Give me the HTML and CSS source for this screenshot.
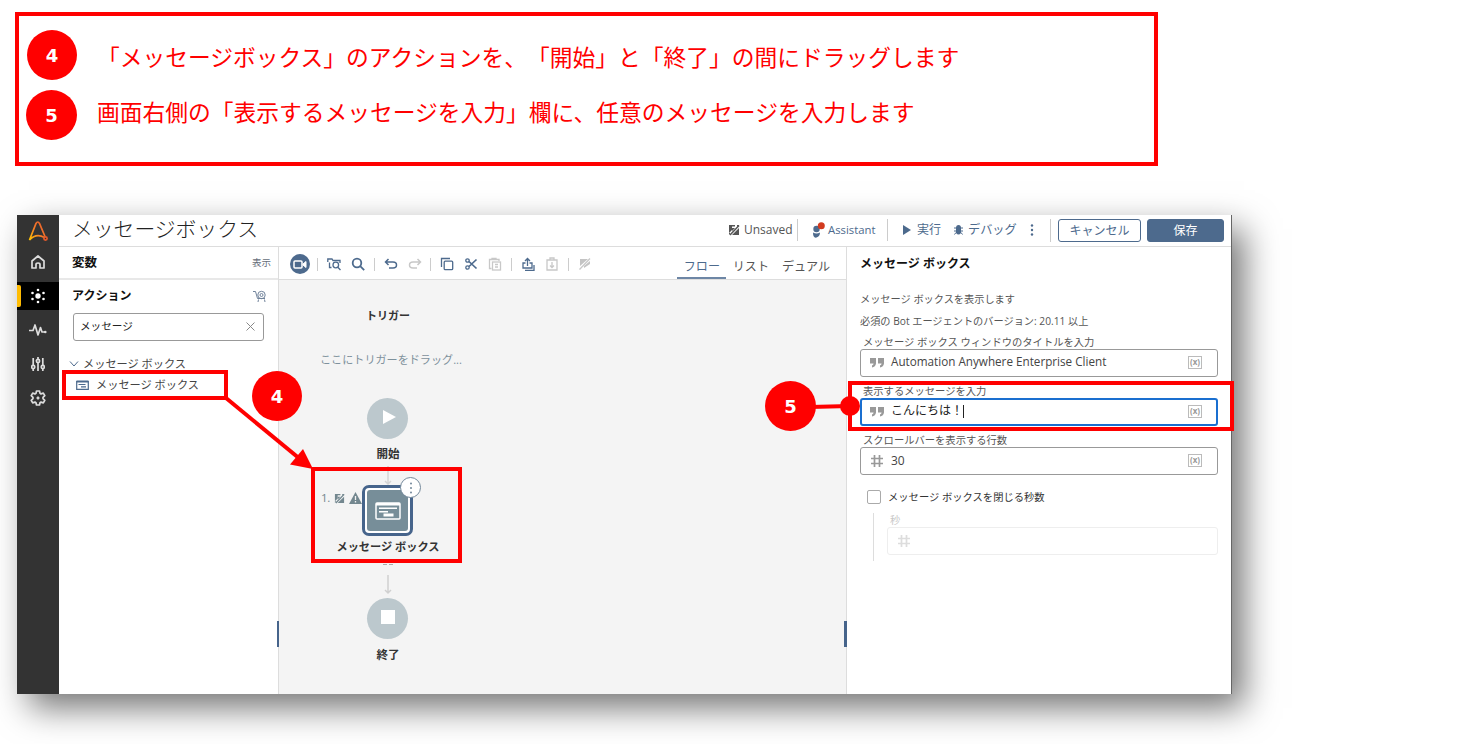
FILE: index.html
```
<!DOCTYPE html>
<html lang="ja">
<head>
    <meta charset="UTF-8">
    <title>メッセージボックス</title>
    <link rel="stylesheet" href="styles.css">
</head>
<body>
    <!-- Shared icons -->
    <svg class="sprite">
        <symbol id="quote" viewBox="0 0 14 10"><path d="M0 0h6v5.5Q5.500 9 2 9.500V7.500Q3.500 7 3.600 5.500H0zM8 0h6v5.500Q13.500 9 10 9.500V7.500Q11.500 7 11.600 5.500H8z"/></symbol>
        <symbol id="hash" viewBox="0 0 14 14"><path d="M4.500 1v12M9.500 1v12M1 4.500h12M1 9.500h12" fill="none" stroke="currentColor" stroke-width="1.700"/></symbol>
        <symbol id="unsaved" viewBox="0 0 12 12"><path d="M1 1h6v1.500H4V6L1 9zM11 4v7H4zM1 9h1.500L1 11z"/><path d="M2 11 11 1.500" fill="none" stroke="currentColor" stroke-width="1.500"/><path d="M4 4h3L4 7zM9 1h2v1L9 3z"/></symbol>
        <symbol id="box" viewBox="0 0 26 18"><rect x="1" y="1" width="24" height="16" rx="1" fill="none" stroke="currentColor" stroke-width="1.500"/><path d="M1 1h24v2.500H1zM4 5.500h18v1.500H4zM4 9h9v1.500H4zM8.500 11.500h10v3h-10z"/></symbol>
        <symbol id="box-small" viewBox="0 0 13 10"><path d="M.700 1.500h11.600v7.800H.700z" fill="none" stroke="currentColor" stroke-width="1.200"/><path d="M.500.500h12V2.500H.500zM2.500 4h7v1h-7zM5 6.200h5v1.300H5z"/></symbol>
    </svg>

    <div class="page">
        <section class="guide">
            <div class="step"><span class="num">4</span><p>「メッセージボックス」のアクションを、「開始」と「終了」の間にドラッグします</p></div>
            <div class="step step-5"><span class="num">5</span><p>画面右側の「表示するメッセージを入力」欄に、任意のメッセージを入力します</p></div>
        </section>

        <div class="app">
            <nav class="sidebar">
                <div class="logo">
                    <svg width="22" height="22" viewBox="0 0 22 22" fill="none" stroke-width="1.700">
                        <defs><linearGradient id="lg" x1="0" y1="1" x2="1" y2="0"><stop offset="0" stop-color="#ffc400"/><stop offset=".5" stop-color="#f5792a"/><stop offset="1" stop-color="#e55a2b"/></linearGradient></defs>
                        <path d="M17.500 17.500Q9 13 2.500 20L9 3.500Q10.800.500 12.500 3.500L18 16.500" stroke="url(#lg)"/>
                        <circle cx="18.500" cy="18.500" r="1.600" stroke="#e55a2b"/>
                    </svg>
                </div>
                <a><svg width="14" height="14" viewBox="0 0 14 14" fill="none" stroke="currentColor" stroke-width="1.700"><path d="M1 6 7 1l6 5v7H9V9.500Q9 8 7 8T5 9.500V13H1z" stroke-linejoin="round"/></svg></a>
                <a class="active"><svg width="16" height="16" viewBox="0 0 16 16" fill="currentColor"><circle cx="8" cy="8" r="2.700"/><circle cx="8" cy="2" r="1.300"/><circle cx="8" cy="14" r="1.300"/><circle cx="2.500" cy="5" r="1.300"/><circle cx="13.500" cy="5" r="1.300"/><circle cx="2.500" cy="11" r="1.300"/><circle cx="13.500" cy="11" r="1.300"/></svg></a>
                <a><svg width="18" height="14" viewBox="0 0 18 14" fill="none" stroke="currentColor" stroke-width="1.700"><path d="M0 7.500h4L6 2l3 10 2.500-7.500L13 9h3" stroke-linejoin="round"/><circle cx="16.300" cy="9" r="1.300" fill="currentColor" stroke="none"/></svg></a>
                <a><svg width="14" height="14" viewBox="0 0 14 14" fill="none" stroke="currentColor" stroke-width="1.700"><path d="M2.200 1v7M2.200 12v2M7 0v2M7 6v8M11.800 1v7M11.800 12v2"/><circle cx="2.200" cy="10" r="1.600"/><circle cx="7" cy="4" r="1.600"/><circle cx="11.800" cy="10" r="1.600"/></svg></a>
                <a><svg width="16" height="16" viewBox="0 0 16 16" fill="none" stroke="currentColor" stroke-width="1.700"><path d="M6.500 1h3l.500 2.300 1 .600 2.300-.800 1.500 2.600L13 7.400v1.200l1.800 1.700-1.500 2.600-2.300-.800-1 .600L9.500 15h-3L6 12.700l-1-.600-2.300.800-1.500-2.600L3 8.600V7.400L1.200 5.700l1.500-2.600 2.300.800 1-.600z" stroke-linejoin="round"/><path d="M8 6.500v3M6.500 8h3"/></svg></a>
            </nav>

            <div class="main">
                <header class="topbar">
                    <h1>メッセージボックス</h1>
                    <span class="unsaved"><svg width="12" height="12" fill="currentColor"><use href="#unsaved"/></svg>Unsaved</span>
                    <span class="assistant">
                        <svg width="14" height="18" viewBox="0 0 14 18"><g fill="#4d6a8d"><circle cx="4.500" cy="8" r="3.200"/><path d="M1 11.500q3.500 2 7 0 0 4-3.500 5t-3.500-5"/></g><circle cx="9.300" cy="4.700" r="3.500" fill="#d23b1f"/></svg>Assistant
                    </span>
                    <span class="run"><svg width="8" height="10" fill="currentColor"><path d="M0 0 8 5 0 10z"/></svg>実行</span>
                    <span class="debug"><svg width="11" height="10" viewBox="0 0 11 10"><path d="M3 3q0-3 2.500-3T8 3v5q-2.500 3-5 0z" fill="currentColor"/><path d="M1 3h9M1 6h9M1.500 9.500 3 7.500M9.500 9.500 8 7.500" stroke="currentColor"/></svg>デバッグ</span>
                    <svg class="more" width="4" height="12" fill="#4d6a8d"><circle cx="2" cy="1.500" r="1.200"/><circle cx="2" cy="6" r="1.200"/><circle cx="2" cy="10.500" r="1.200"/></svg>
                    <span class="actions">
                        <button class="btn">キャンセル</button>
                        <button class="btn primary">保存</button>
                    </span>
                </header>

                <div class="columns">
                    <aside class="palette">
                        <div class="vars"><b>変数</b><span>表示</span></div>
                        <div class="acts">
                            <b>アクション</b>
                            <svg width="14" height="13" viewBox="0 0 14 13" fill="none" stroke="#71839b"><path d="M0 1.500h2.500l2 7h7.500"/><circle cx="8.500" cy="5" r="3.700"/><circle cx="8.500" cy="5" r="1.500"/><path d="M5.500 9.500 5 12M11.500 9.500l.500 2.500"/></svg>
                        </div>
                        <div class="search"><span>メッセージ</span><svg width="9" height="9" stroke="#888"><path d="M.500.500l8 8M8.500.500l-8 8"/></svg></div>
                        <div class="group"><svg width="10" height="6" fill="none" stroke="#4d6a8d"><path d="M1 .500l4 4.500 4-4.500"/></svg>メッセージ ボックス</div>
                        <div class="item"><svg width="13" height="10" color="#4d6a8d" fill="currentColor"><use href="#box-small"/></svg>メッセージ ボックス</div>
                    </aside>

                    <section class="flow">
                        <div class="toolbar">
                            <i class="cam"><svg width="14" height="9" viewBox="0 0 14 9" fill="none" stroke="#fff" stroke-width="1.500"><rect x="1" y="1" width="8" height="7" rx="1"/><path d="M10 4 13 1.500v6L10 5z" fill="#fff" stroke-width="1"/></svg></i>
                            <hr>
                            <i><svg width="14" height="14" viewBox="0 0 14 14"><path d="M4.500 10.500H2.500V5.500M.800 5V2H5l1 1.500h7V6"/><circle cx="8.800" cy="8" r="2.800"/><path d="M10.800 10.200 13.500 13"/></svg></i>
                            <i><svg width="14" height="14" viewBox="0 0 14 14" stroke-width="1.800"><circle cx="6" cy="6" r="4.300"/><path d="m9.200 9.200 4 4"/></svg></i>
                            <hr>
                            <i><svg width="14" height="12" viewBox="0 0 14 12" stroke-width="1.500"><path d="M4.500 1 1.500 4l3 3M1.500 4H9q3.500 0 3.500 3T9 10H5"/></svg></i>
                            <i class="off redo"><svg width="14" height="12" viewBox="0 0 14 12" stroke-width="1.500"><path d="m9.500 1 3 3-3 3M12.500 4H5Q1.500 4 1.500 7T5 10h4"/></svg></i>
                            <hr>
                            <i><svg width="14" height="14" viewBox="0 0 14 14"><path d="M1.500 10V1.500H10"/><rect x="4.200" y="4.200" width="8.500" height="8.500" rx="1"/></svg></i>
                            <i><svg width="14" height="14" viewBox="0 0 14 14"><circle cx="3.500" cy="3.500" r="1.700"/><circle cx="3.500" cy="10.500" r="1.700"/><path d="M5 4.500 12.500 11.500M5 9.500 12.500 2.500" stroke-width="1.700"/></svg></i>
                            <i class="off"><svg width="14" height="14" viewBox="0 0 14 14"><path d="M3.500 11.500h-2v-9H11V4M4 2.500v-1h4v1"/><rect x="4.500" y="5" width="8" height="8"/><path d="M7 7.500h3M7 10h3"/></svg></i>
                            <hr>
                            <i><svg width="14" height="14" viewBox="0 0 14 14"><path d="M6.500 9V1.500M4 4l2.500-2.500L9 4M4.500 6H2v5h9V6H8.500M4 13.300h9V8"/></svg></i>
                            <i class="off"><svg width="14" height="14" viewBox="0 0 14 14"><path d="M2 3h10v10H2zM5 3V1h4v2M7 5v5M5 8.500l2 2 2-2"/></svg></i>
                            <hr>
                            <i class="off"><svg width="14" height="14" viewBox="0 0 14 14"><path d="M2 2h8L2 9zM12 4v3L6 11V9z" fill="#c4c4c4" stroke="none"/><path d="M1.500 12.500 12 1.500"/></svg></i>
                            <div class="tabs"><span class="on">フロー</span><span>リスト</span><span>デュアル</span></div>
                        </div>

                        <!-- Flow nodes -->
                        <div class="canvas">
                            <b class="node t-trigger">トリガー</b>
                            <span class="node t-drop">ここにトリガーをドラッグ...</span>
                            <div class="node circle n-start"><svg width="13" height="14" fill="#fff"><path d="M0 0 13 7 0 14z"/></svg></div>
                            <b class="node t-start">開始</b>
                            <svg class="node link-1" width="8" height="19" fill="none" stroke="#d5d5d5"><path d="M4 0v18M1 15l3 3 3-3" stroke-width="1.500"/></svg>
                            <div class="node t-index">1.
                                <svg width="11" height="11" viewBox="0 0 12 12" fill="currentColor"><use href="#unsaved"/></svg>
                                <svg width="13" height="12" viewBox="0 0 13 12"><path d="M6.500 0 13 12H0z" fill="currentColor"/><path d="M6.500 4v4M6.500 9v1.500" stroke="#f4f4f4" stroke-width="1.300"/></svg>
                            </div>
                            <div class="node n-box"><div><svg width="26" height="18" color="#fff" fill="currentColor"><use href="#box"/></svg></div></div>
                            <div class="node n-more"><svg width="4" height="12" fill="#73889a"><circle cx="2" cy="1.500" r="1"/><circle cx="2" cy="6" r="1"/><circle cx="2" cy="10.500" r="1"/></svg></div>
                            <b class="node t-box">メッセージ ボックス</b>
                            <svg class="node link-2" width="10" height="32" fill="none" stroke="#d0d0d0" stroke-width="1.500"><path d="M0 1.500h4M6 1.500h4" stroke="#aaa" stroke-width="1"/><path d="M5 12v18M2 27l3 3 3-3"/></svg>
                            <div class="node circle n-end"><svg width="14" height="14" fill="#fff"><path d="M0 0h14v14H0z"/></svg></div>
                            <b class="node t-end">終了</b>
                            <div class="node grip g-left"></div>
                            <div class="node grip g-right"></div>
                        </div>
                    </section>

                    <aside class="props">
                        <h2>メッセージ ボックス</h2>
                        <p class="desc">メッセージ ボックスを表示します</p>
                        <p class="desc ver">必須の Bot エージェントのバージョン: 20.11 以上</p>
                        <label>メッセージ ボックス ウィンドウのタイトルを入力</label>
                        <div class="field"><svg width="14" height="10" fill="#999"><use href="#quote"/></svg><span class="latin">Automation Anywhere Enterprise Client</span><em>(x)</em></div>
                        <label>表示するメッセージを入力</label>
                        <div class="field focus"><svg width="14" height="10" fill="#999"><use href="#quote"/></svg><span class="typed">こんにちは！</span><em>(x)</em></div>
                        <label>スクロールバーを表示する行数</label>
                        <div class="field"><svg width="14" height="14" color="#999"><use href="#hash"/></svg><span>30</span><em>(x)</em></div>
                        <div class="check"><span></span>メッセージ ボックスを閉じる秒数</div>
                        <div class="nested">
                            <label>秒</label>
                            <div class="field"><svg width="14" height="14" color="#ddd"><use href="#hash"/></svg></div>
                        </div>
                    </aside>
                </div>
            </div>
        </div>

        <!-- Callouts over the app -->
        <div class="mark m-item"></div>
        <div class="mark m-node"></div>
        <div class="mark m-field"></div>
        <svg class="lines" width="1480" height="744">
            <path d="M226 398 300 459" stroke="#f00" stroke-width="4"/>
            <path d="M313 469 290 464.500 303 449z" fill="#f00"/>
            <path d="M810 407 850 406" stroke="#f00" stroke-width="4"/>
            <circle cx="850" cy="406" r="10" fill="#f00"/>
        </svg>
        <span class="num callout c-4">4</span>
        <span class="num callout c-5">5</span>
    </div>
</body>
</html>
```
FILE: styles.css
```
* {
    box-sizing: border-box;
}
body {
    margin: 0;
    background: #fff;
    font-family: "Open Sans", "Noto Sans CJK JP", sans-serif;
    font-size: 12px;
    line-height: 1;
    color: #444;
}
h1, h2, p, hr {
    margin: 0;
    font-weight: normal;
}
svg {
    flex: none;
}
.sprite {
    display: none;
}
.page {
    position: relative;
    width: 1480px;
    height: 744px;
    padding: 12px 0 0 15px;
    overflow: hidden;
}

/* Instructions */
.guide {
    width: 1143px;
    height: 154px;
    border: 4px solid #f00;
    padding: 14px 0 0 8px;
}
.step {
    display: flex;
    height: 50px;
    color: #f00;
    font-family: "Noto Sans CJK JP", sans-serif;
    font-size: 22.75px;
    font-weight: 300;
    text-spacing-trim: space-all;
    white-space: nowrap;
}
.step p {
    margin: 16px 0 0 20px;
}
.step-5 {
    margin: 10px 0 0 -1px;
}
.step-5 p {
    margin-top: 11px;
}
.num {
    display: flex;
    align-items: center;
    justify-content: center;
    width: 50px;
    height: 50px;
    border-radius: 50%;
    background: #f00;
    color: #fff;
    font: bold 18px "DejaVu Sans", sans-serif;
}
.step-5 .num {
    width: 51px;
}

/* App window */
.app {
    display: flex;
    width: 1215px;
    height: 479px;
    margin: 49px 0 0 2px;
    background: #fff;
    box-shadow: 12px 14px 32px rgba(0, 0, 0, .54);
    border-right: 1px solid #666;
    white-space: nowrap;
}
.sidebar {
    width: 42px;
    background: #333;
    display: flex;
    flex-direction: column;
    gap: 6px;
}
.logo {
    height: 27px;
    padding: 5px 0 0 10px;
}
.sidebar a {
    display: flex;
    align-items: center;
    justify-content: center;
    height: 28px;
    color: #ddd;
}
.sidebar .active {
    background: #000;
    color: #fff;
    position: relative;
}
.active::before {
    content: "";
    position: absolute;
    left: 0;
    top: 3px;
    width: 4px;
    height: 22px;
    border-radius: 0 2px 2px 0;
    background: #ffbc03;
}
.main {
    flex: 1;
    min-width: 0;
}
.topbar {
    display: flex;
    align-items: center;
    height: 32px;
    padding: 0 7px 1px 13px;
    border-bottom: 1px solid #ddd;
    color: #4d6a8d;
}
.topbar h1 {
    flex: 1;
    padding-bottom: 1px;
    font-size: 20.8px;
    font-weight: 300;
    color: #222;
}
.topbar > span {
    display: flex;
    align-items: center;
}
.unsaved {
    width: 70px;
    height: 22px;
    gap: 4px;
    border-right: 1px solid #ccc;
    color: #555;
}
.assistant {
    width: 90px;
    height: 22px;
    padding-left: 14px;
    gap: 2px;
    border-right: 1px solid #ccc;
    font-size: 11.3px;
}
.run {
    width: 65px;
    padding-left: 15px;
    gap: 6px;
}
.debug {
    gap: 4px;
    width: 77px;
    font-size: 12.2px;
}
.more {
    margin-right: 16px;
}
.topbar .actions {
    height: 23px;
    padding-left: 7px;
    gap: 6px;
    border-left: 1px solid #ccc;
}
.btn {
    width: 83px;
    height: 23px;
    padding: 0 0 1px;
    border: 1px solid #4d6a8d;
    border-radius: 3px;
    background: #fff;
    color: #4d6a8d;
    font: 12px "Noto Sans CJK JP", sans-serif;
}
.btn.primary {
    width: 77px;
    background: #4d6a8d;
    color: #fff;
}
.columns {
    display: flex;
    height: 447px;
}

/* Action palette */
.palette {
    width: 220px;
    border-right: 1px solid #ddd;
}
.palette b {
    color: #111;
    font-weight: 600;
}
.vars, .acts {
    display: flex;
    justify-content: space-between;
    align-items: center;
    height: 33px;
    padding: 1px 7px 0 13px;
    border-bottom: 2px solid #e8e8e8;
}
.vars {
    font-size: 12.5px;
}
.vars span {
    font-size: 9.5px;
    color: #666e7a;
}
.acts {
    border: 0;
    padding: 0 11px 1px 13px;
}
.search {
    display: flex;
    align-items: center;
    justify-content: space-between;
    width: 191px;
    height: 28px;
    margin-left: 14px;
    padding: 0 8px 1px 6px;
    border: 1px solid #999;
    border-radius: 3px;
    font-size: 10.6px;
    color: #222;
}
.group, .item {
    display: flex;
    align-items: center;
    gap: 4px;
    padding-left: 10px;
    height: 21px;
    font-size: 11.2px;
}
.group {
    margin-top: 12px;
}
.item {
    padding-left: 17px;
    gap: 7px;
}

/* Flow editor */
.flow {
    width: 567px;
    background: #f4f4f4;
}
.toolbar {
    display: flex;
    align-items: center;
    height: 33px;
    padding: 2px 0 0 9px;
    background: #fff;
    border-bottom: 1px solid #ddd;
}
.toolbar i {
    display: flex;
    justify-content: center;
    width: 24px;
    height: 14px;
    align-items: center;
    fill: none;
    stroke: #4d6a8d;
    stroke-width: 1.3;
}
.toolbar .cam {
    width: 20px;
    height: 20px;
    margin: 0 3px 0 2px;
    border-radius: 50%;
    background: #4d6a8d;
}
.toolbar .off {
    stroke: #c8c8c8;
}
.toolbar .redo {
    width: 23px;
}
.toolbar hr {
    width: 1px;
    height: 13px;
    margin: 0 4px;
    border: 0;
    background: #ccc;
}
.tabs {
    display: flex;
    align-self: stretch;
    margin-left: auto;
    padding-right: 16px;
    color: #555;
}
.tabs span {
    padding: 12px 0 0;
    margin-left: 13px;
    font-size: 12.1px;
}
.tabs .on {
    width: 49px;
    padding-left: 7px;
    margin-right: -6px;
    color: #4d6a8d;
    border-bottom: 2px solid #6d86a5;
}
.canvas {
    position: relative;
    height: 414px;
}
.canvas b {
    font-weight: 600;
    color: #333;
    transform: translateX(-50%);
}
.node {
    position: absolute;
}
.t-trigger { left: 109px; top: 30px; font-size: 11px; }
.t-drop { left: 41px; top: 74px; font-size: 11.1px; color: #7e919c; }
.circle {
    left: 88px;
    display: flex;
    align-items: center;
    justify-content: center;
    width: 41px;
    height: 41px;
    border-radius: 50%;
    background: #bcc8cd;
}
.n-start { top: 118px; padding: 0 0 3px 4px; }
.t-start { left: 109px; top: 168px; font-size: 11.5px; }
.link-1 { left: 105px; top: 186px; }
.t-index {
    left: 42px;
    top: 212px;
    display: flex;
    align-items: center;
    gap: 4px;
    font-size: 11.5px;
    letter-spacing: -.4px;
    color: #73878f;
}
.n-box {
    left: 83px;
    top: 205px;
    width: 51px;
    height: 51px;
    padding: 2px;
    border: 3px solid #46648b;
    border-radius: 7px;
    background: #fff;
}
.n-box div {
    display: flex;
    align-items: center;
    justify-content: center;
    height: 100%;
    border-radius: 3px;
    background: #778e99;
}
.n-more {
    left: 121px;
    top: 197px;
    display: flex;
    align-items: center;
    justify-content: center;
    width: 21px;
    height: 21px;
    border: 1px solid #73889a;
    border-radius: 50%;
    background: #fff;
}
.t-box { left: 109px; top: 261px; font-size: 11.2px; }
.link-2 { left: 104px; top: 283px; }
.n-end { top: 318px; padding-bottom: 3px; }
.t-end { left: 109px; top: 369px; font-size: 11.5px; }
.grip {
    top: 341px;
    width: 2px;
    height: 26px;
    background: #46648b;
}
.g-left { left: -2px; }
.g-right { right: -1px; width: 3px; z-index: 1; }

/* Properties */
.props {
    flex: 1;
    padding: 11px 13px 0 13px;
    border-left: 1px solid #ddd;
    font-size: 10.3px;
    color: #555;
}
.props h2 {
    height: 12px;
    margin-bottom: 24px;
    font-size: 12px;
    font-weight: 600;
    color: #111;
}
.desc {
    height: 11px;
    font-size: 10.2px;
}
.ver {
    margin: 11px 0 10px;
}
.props label {
    display: block;
    height: 11px;
    padding-left: 3px;
    margin-bottom: 1px;
}
.field {
    display: flex;
    align-items: center;
    height: 28px;
    margin-bottom: 9px;
    padding: 0 15px 1px 9px;
    border: 1px solid #999;
    border-radius: 3px;
    font-size: 12px;
    color: #444;
}
.field span {
    margin-left: 7px;
}
.field .latin {
    padding-bottom: 1px;
    font-size: 11.7px;
}
.field em {
    margin-left: auto;
    width: 14px;
    height: 13px;
    border: 1px solid #bbb;
    font: bold 8px/10px "Open Sans", sans-serif;
    text-align: center;
    color: #999;
}
.focus {
    border: 2px solid #1a6fd0;
    padding: 0 14px 1px 8px;
}
.typed {
    height: 13px;
    width: 73px;
    border-right: 1px solid #222;
    color: #222;
}
.check {
    display: flex;
    align-items: center;
    height: 14px;
    gap: 7px;
    margin: 15px 0 9px 7px;
    color: #333;
}
.check span {
    width: 14px;
    height: 14px;
    border: 1px solid #aaa;
    border-radius: 2px;
}
.nested {
    height: 48px;
    margin-left: 13px;
    padding: 2px 0 0 13px;
    border-left: 1px solid #ddd;
    color: #c8c8c8;
}
.nested .field {
    border-color: #eee;
}

/* Callouts */
.mark {
    position: absolute;
    border: 4px solid #f00;
}
.m-item { left: 62px; top: 370px; width: 166px; height: 30px; }
.m-node { left: 311px; top: 467px; width: 151px; height: 96px; }
.m-field { left: 848px; top: 381px; width: 386px; height: 50px; }
.lines {
    position: absolute;
    left: 0;
    top: 0;
}
.callout {
    position: absolute;
}
.c-4 { left: 252px; top: 371px; }
.c-5 { left: 765px; top: 381px; width: 51px; }
```
